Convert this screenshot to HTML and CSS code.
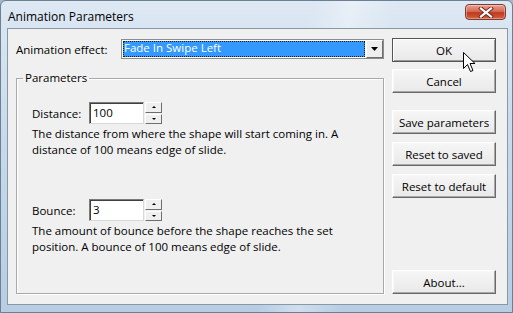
FILE: index.html
```html
<!DOCTYPE html>
<html lang="en">
<head>
    <meta charset="UTF-8">
    <title>Animation Parameters</title>
    <link rel="stylesheet" href="styles.css">
</head>
<body>
    <div class="window">
        <div class="titlebar">
            <span class="title">Animation Parameters</span>
            <button class="close-btn" aria-label="Close">
                <svg width="16" height="11" viewBox="0 0 16 11">
                    <path d="M3 1.5 L13 9.5 M13 1.5 L3 9.5" stroke="#6b2a20" stroke-width="4" stroke-linecap="square"/>
                    <path d="M3 1.5 L13 9.5 M13 1.5 L3 9.5" stroke="#fff" stroke-width="2.2" stroke-linecap="square"/>
                </svg>
            </button>
        </div>

        <div class="client">
            <div class="main">
                <div class="effect-row">
                    <span class="effect-label">Animation effect:</span>
                    <div class="combo">
                        <span class="combo-value">Fade In Swipe Left</span>
                        <span class="combo-arrow">
                            <svg width="7" height="4" viewBox="0 0 7 4"><path d="M0 0 H7 L3.5 4 Z" fill="#000"/></svg>
                        </span>
                    </div>
                </div>

                <fieldset class="params">
                    <legend>Parameters</legend>

                    <div class="param">
                        <div class="param-row">
                            <span class="param-label">Distance:</span>
                            <span class="edit">100</span>
                            <span class="spinner">
                                <span class="spin-btn"><i class="tri-up"></i></span>
                                <span class="spin-btn"><i class="tri-down"></i></span>
                            </span>
                        </div>
                        <p class="desc">The distance from where the shape will start coming in. A distance of 100 means edge of slide.</p>
                    </div>

                    <div class="param second">
                        <div class="param-row">
                            <span class="param-label">Bounce:</span>
                            <span class="edit">3</span>
                            <span class="spinner">
                                <span class="spin-btn"><i class="tri-up"></i></span>
                                <span class="spin-btn"><i class="tri-down"></i></span>
                            </span>
                        </div>
                        <p class="desc">The amount of bounce before the shape reaches the set position. A bounce of 100 means edge of slide.</p>
                    </div>
                </fieldset>
            </div>

            <div class="side">
                <button class="btn default">OK</button>
                <button class="btn">Cancel</button>
                <button class="btn group-start">Save parameters</button>
                <button class="btn">Reset to saved</button>
                <button class="btn">Reset to default</button>
                <button class="btn about">About...</button>
            </div>
        </div>

        <!-- mouse pointer hovering the OK button -->
        <svg class="cursor" width="13" height="21" viewBox="0 0 13 21">
            <path d="M0.5 0.5 V16.5 L4.5 12.5 L7.5 19.5 L10 18.5 L7 11.5 H12 Z" fill="#fff" stroke="#000" stroke-width="1"/>
        </svg>
    </div>
</body>
</html>
```

FILE: styles.css
```css
* {
    margin: 0;
    padding: 0;
    box-sizing: border-box;
}

body {
    width: 513px;
    height: 313px;
    overflow: hidden;
    font-family: "Open Sans", "Liberation Sans", sans-serif;
    font-size: 11.5px;
    color: #000;
    background: #a9b7c4;
}

.window {
    position: relative;
    width: 513px;
    height: 313px;
    display: flex;
    flex-direction: column;
    border: 1px solid #6c7f93;
    border-radius: 6px 6px 0 0;
    background:
        linear-gradient(100deg, transparent 55%, rgba(255,255,255,0.35) 62%, transparent 70%),
        linear-gradient(to bottom, #dde8f3 0%, #c9dbec 40%, #b6cde4 100%);
}

/* Title bar */
.titlebar {
    height: 27px;
    display: flex;
    align-items: center;
    justify-content: space-between;
    padding: 0 6px 0 7px;
}

.title {
    font-size: 12px;
    margin-top: 3px;
}

.close-btn {
    width: 41px;
    height: 16px;
    margin-top: -5px;
    display: flex;
    align-items: center;
    justify-content: center;
    border: 1px solid #7b3a32;
    border-radius: 4px;
    background: linear-gradient(to bottom, #e8a293 0%, #d56a55 45%, #c0391f 55%, #d2623f 100%);
    box-shadow: inset 0 0 0 1px rgba(255,255,255,0.35);
}

/* Client area */
.client {
    flex: 1;
    margin: 0 4px 7px 6px;
    display: flex;
    gap: 8px;
    padding: 9px 11px 10px 8px;
    background: #f0f0f0;
    border: 1px solid #8a97a5;
}

.main {
    width: 368px;
    padding-top: 1px;
    display: flex;
    flex-direction: column;
}

.effect-row {
    display: flex;
    align-items: center;
    height: 20px;
}

.effect-label {
    width: 105px;
}

.combo {
    flex: 1;
    height: 20px;
    display: flex;
    background: #fff;
    border: 1px solid #8c8c8c;
    padding: 1px;
}

.combo-value {
    flex: 1;
    background: #3399ff;
    color: #fff;
    line-height: 14px;
    padding-left: 1px;
    outline: 1px dotted #1a1a1a;
    outline-offset: -1px;
}

.combo-arrow {
    width: 17px;
    margin: -1px -1px -1px 1px;
    display: flex;
    align-items: center;
    justify-content: center;
    background: #eeeeee;
    border: 1px solid;
    border-color: #ffffff #6e6e6e #6e6e6e #ffffff;
}

/* Group box */
.params {
    flex: 1;
    margin-top: 11px;
    border: 1px solid #a9a9a9;
    box-shadow: inset 1px 1px 0 #fff, 1px 1px 0 #fff;
    padding: 16px 0 0 0;
}

.params legend {
    margin-left: 6px;
    padding: 0 2px;
    line-height: 16px;
}

.param {
    padding-left: 15px;
}

.param.second {
    margin-top: 41px;
}

.param-row {
    display: flex;
    align-items: center;
    height: 22px;
}

.param-label {
    width: 57px;
}

.edit {
    width: 55px;
    height: 22px;
    background: #fff;
    border: 1px solid;
    border-color: #7a7a7a #d8d8d8 #d8d8d8 #7a7a7a;
    box-shadow: inset 1px 1px 0 #404040;
    padding: 2px 0 0 3px;
    line-height: 16px;
}

.spinner {
    margin-left: 1px;
    width: 17px;
    height: 22px;
    display: flex;
    flex-direction: column;
    gap: 1px;
}

.spin-btn {
    flex: 1;
    display: flex;
    align-items: center;
    justify-content: center;
    background: #efefef;
    border: 1px solid;
    border-color: #ffffff #6e6e6e #6e6e6e #ffffff;
}

.tri-up,
.tri-down {
    width: 0;
    height: 0;
    border-left: 2px solid transparent;
    border-right: 2px solid transparent;
}

.tri-up {
    border-bottom: 2px solid #000;
}

.tri-down {
    border-top: 2px solid #000;
}

.desc {
    margin-top: 2px;
    line-height: 16px;
    width: 335px;
}

/* Right hand buttons */
.side {
    width: 104px;
    display: flex;
    flex-direction: column;
}

.btn {
    height: 24px;
    font-family: inherit;
    font-size: 11.5px;
    color: #000;
    background: linear-gradient(to bottom, #f6f6f6, #e9e9e9);
    border: 1px solid;
    border-color: #ffffff #6a6a6a #6a6a6a #ffffff;
    box-shadow: inset -1px -1px 0 #a8a8a8, inset 1px 1px 0 #f8f8f8;
}

.btn.default {
    border-color: #555;
    box-shadow: inset 1px 1px 0 #fff, inset -1px -1px 0 #9a9a9a;
}

.btn + .btn {
    margin-top: 7px;
}

.group-start ~ .btn {
    margin-top: 8px;
}

.btn.group-start {
    margin-top: 17px;
}

.btn.about {
    margin-top: auto;
}

.cursor {
    position: absolute;
    left: 462px;
    top: 51px;
}
```
